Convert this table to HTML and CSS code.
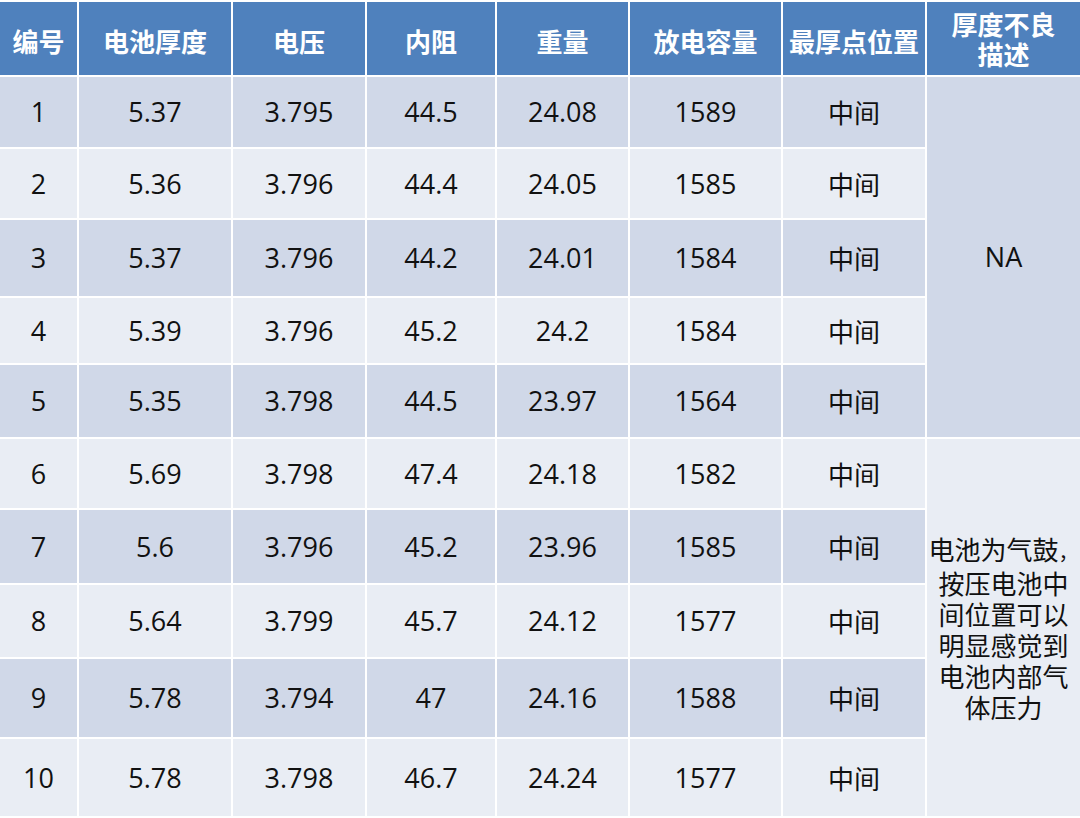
FILE: index.html
```html
<!DOCTYPE html>
<html lang="zh-CN">
<head>
<meta charset="utf-8">
<title>电池厚度测试</title>
<link rel="stylesheet" href="styles.css">
</head>
<body>
<table class="grid">
  <colgroup>
    <col class="c1"><col class="c2"><col class="c3"><col class="c4">
    <col class="c5"><col class="c6"><col class="c7"><col class="c8">
  </colgroup>
  <thead>
    <tr class="head">
      <th>编号</th>
      <th>电池厚度</th>
      <th>电压</th>
      <th>内阻</th>
      <th>重量</th>
      <th>放电容量</th>
      <th>最厚点位置</th>
      <th class="two">厚度不良<br>描述</th>
    </tr>
  </thead>
  <tbody>
    <tr class="odd">
      <td>1</td><td>5.37</td><td>3.795</td><td>44.5</td><td>24.08</td><td>1589</td><td class="cn">中间</td>
      <td rowspan="5" class="merged odd-cell">NA</td>
    </tr>
    <tr class="even">
      <td>2</td><td>5.36</td><td>3.796</td><td>44.4</td><td>24.05</td><td>1585</td><td class="cn">中间</td>
    </tr>
    <tr class="odd">
      <td>3</td><td>5.37</td><td>3.796</td><td>44.2</td><td>24.01</td><td>1584</td><td class="cn">中间</td>
    </tr>
    <tr class="even">
      <td>4</td><td>5.39</td><td>3.796</td><td>45.2</td><td>24.2</td><td>1584</td><td class="cn">中间</td>
    </tr>
    <tr class="odd">
      <td>5</td><td>5.35</td><td>3.798</td><td>44.5</td><td>23.97</td><td>1564</td><td class="cn">中间</td>
    </tr>
    <tr class="even">
      <td>6</td><td>5.69</td><td>3.798</td><td>47.4</td><td>24.18</td><td>1582</td><td class="cn">中间</td>
      <td rowspan="5" class="merged even-cell desc">电池为气鼓<span class="punct">，</span><br>按压电池中<br>间位置可以<br>明显感觉到<br>电池内部气<br>体压力</td>
    </tr>
    <tr class="odd">
      <td>7</td><td>5.6</td><td>3.796</td><td>45.2</td><td>23.96</td><td>1585</td><td class="cn">中间</td>
    </tr>
    <tr class="even">
      <td>8</td><td>5.64</td><td>3.799</td><td>45.7</td><td>24.12</td><td>1577</td><td class="cn">中间</td>
    </tr>
    <tr class="odd">
      <td>9</td><td>5.78</td><td>3.794</td><td>47</td><td>24.16</td><td>1588</td><td class="cn">中间</td>
    </tr>
    <tr class="even">
      <td>10</td><td>5.78</td><td>3.798</td><td>46.7</td><td>24.24</td><td>1577</td><td class="cn">中间</td>
    </tr>
  </tbody>
</table>
</body>
</html>
```

FILE: styles.css
```css
html, body {
  margin: 0;
  padding: 0;
  background: #ffffff;
}

body {
  font-family: "Open Sans", "Noto Sans CJK SC", sans-serif;
  color: #111111;
}

.grid {
  width: 1080px;
  table-layout: fixed;
  border-collapse: separate;
  border-spacing: 0;
}

.c1 { width: 77px; }
.c2 { width: 154px; }
.c3 { width: 134px; }
.c4 { width: 130px; }
.c5 { width: 133px; }
.c6 { width: 153px; }
.c7 { width: 144px; }
.c8 { width: 155px; }

.grid th,
.grid td {
  box-sizing: border-box;
  padding: 0;
  text-align: center;
  vertical-align: middle;
  border-top: 2px solid #ffffff;
  border-left: 2px solid #ffffff;
  white-space: nowrap;
}

.grid tr > :first-child {
  border-left: none;
}

.head th {
  background: #4f81bd;
  color: #ffffff;
  font-family: "Noto Sans CJK SC", sans-serif;
  font-weight: 700;
  font-size: 26px;
  line-height: 30px;
  padding-top: 4px;
}

.head th.two {
  padding-top: 0;
}

.grid td {
  font-size: 27px;
  line-height: 32px;
}

.grid td.cn {
  font-family: "Noto Sans CJK SC", sans-serif;
  font-size: 26px;
}

.odd td { background: #d0d8e8; }
.even td { background: #e9edf4; }

.grid td.odd-cell { background: #d0d8e8; }
.grid td.even-cell { background: #e9edf4; }

.grid td.desc {
  font-family: "Noto Sans CJK SC", sans-serif;
  font-size: 26px;
  line-height: 31px;
}

.punct {
  font-size: 20px;
}

.head { height: 75px; }
tbody tr:nth-child(1) { height: 72px; }
tbody tr:nth-child(2) { height: 71px; }
tbody tr:nth-child(3) { height: 78px; }
tbody tr:nth-child(4) { height: 67px; }
tbody tr:nth-child(5) { height: 74px; }
tbody tr:nth-child(6) { height: 71px; }
tbody tr:nth-child(7) { height: 75px; }
tbody tr:nth-child(8) { height: 74px; }
tbody tr:nth-child(9) { height: 80px; }
tbody tr:nth-child(10) { height: 79px; }
```
